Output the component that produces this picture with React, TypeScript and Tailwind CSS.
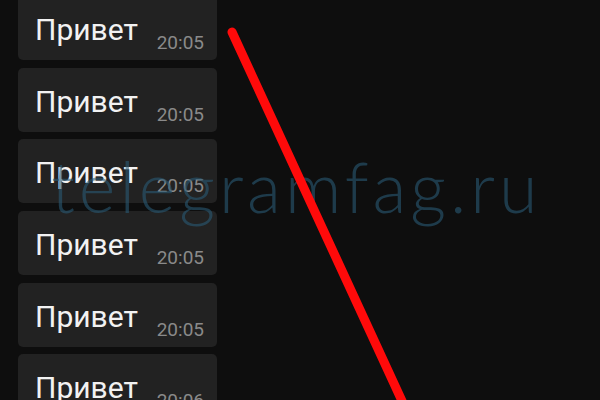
import React from "react";

const times = ["20:05", "20:05", "20:05", "20:05", "20:05", "20:06"];

export default function App() {
  return (
    <div className="relative w-[600px] h-[400px] overflow-hidden bg-[#0e0e0e]" style={{ fontFamily: "Roboto, 'Noto Sans', sans-serif" }}>
      <div className="flex flex-col gap-[7.7px] pl-[18px] mt-[-4px]">
        {times.map((t, i) => (
          <div key={i} className="w-[199px] h-[64px] shrink-0 rounded-[5px] bg-[#222222] flex justify-between pl-[17px] pr-[13px]">
            <span className="text-[30px] leading-none text-[#f2f2f2] pt-[19px]">Привет</span>
            <span className="text-[19px] leading-none text-[#8a8a8a] pt-[37px]">{t}</span>
          </div>
        ))}
      </div>
      <div
        className="absolute left-[51px] top-[151px] text-[70px] leading-none font-light tracking-[4px] text-[#2a5a75]/60 pointer-events-none whitespace-nowrap"
        style={{ fontFamily: "Lato, sans-serif" }}
      >
        telegramfag.ru
      </div>
      <svg className="absolute inset-0 pointer-events-none" width="600" height="400" viewBox="0 0 600 400">
        <line x1="232" y1="32" x2="420" y2="440" stroke="#ff0a0a" strokeWidth="9" strokeLinecap="round" />
      </svg>
    </div>
  );
}
